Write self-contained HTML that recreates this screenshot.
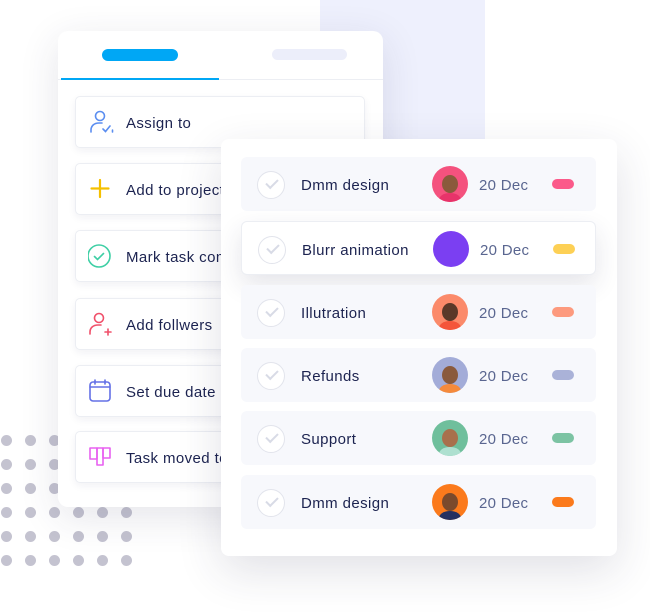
<!DOCTYPE html>
<html><head><meta charset="utf-8"><style>
*{margin:0;padding:0;box-sizing:border-box}
body{width:650px;height:614px;background:#fff;position:relative;overflow:hidden;font-family:"Liberation Sans",sans-serif}
.abs{position:absolute}
.bgp{left:320px;top:0;width:165px;height:150px;background:#eef0fd}
.dot{position:absolute;width:11px;height:11px;border-radius:50%;background:#c4c3d0}
.card1{left:58px;top:31px;width:325px;height:476px;background:#fff;border-radius:10px;box-shadow:0 10px 40px rgba(40,40,80,.12)}
.item{position:absolute;left:17px;width:290px;height:52px;border:1px solid #eceef3;border-radius:5px;background:#fff;box-shadow:0 3px 8px rgba(40,40,80,.06)}
.item span{position:absolute;left:50px;top:18px;font-size:15px;color:#1c2350;letter-spacing:.4px}
.item svg{position:absolute;left:12px;top:12px}
.card2{left:221px;top:139px;width:396px;height:417px;background:#fff;border-radius:8px;box-shadow:0 15px 45px rgba(40,40,80,.14)}
.row{position:absolute;left:20px;width:355px;height:54px;background:#f7f8fc;border-radius:6px}
.row.hl{background:#fff;border:1px solid #eceef3;box-shadow:0 10px 25px rgba(40,40,80,.12)}
.chk{position:absolute;left:16px;top:14px;width:28px;height:28px;border-radius:50%;border:1px solid #e2e4ec;background:#fff}
.row .t{position:absolute;left:60px;top:20px;font-size:15px;color:#1c2350;letter-spacing:.4px}
.av{position:absolute;left:191px;top:9px;width:36px;height:36px;border-radius:50%;overflow:hidden}
.av i{position:absolute;left:10px;top:9px;width:16px;height:18px;border-radius:50%;background:#8a5a3c}
.av b{position:absolute;left:7px;top:27px;width:22px;height:14px;border-radius:50%}
.d{position:absolute;left:238px;top:20px;font-size:15px;color:#5a6690;letter-spacing:.3px}
.pill{position:absolute;left:311px;top:22px;width:22px;height:10px;border-radius:5px}
.chk::after{content:"";position:absolute;left:8px;top:7px;width:10px;height:5px;border-left:2px solid #d8dbe6;border-bottom:2px solid #d8dbe6;transform:rotate(-45deg)}
</style></head><body>
<div class="abs bgp"></div>
<div id="dots"></div>
<script>
(function(){var h='';for(var r=0;r<6;r++)for(var c=0;c<6;c++){h+='<div class="dot" style="left:'+(1+c*24)+'px;top:'+(435+r*24)+'px"></div>'}document.getElementById('dots').innerHTML=h})();
</script>
<div class="abs card1">
 <div class="abs" style="left:44px;top:18px;width:76px;height:12px;border-radius:6px;background:#00a7f5"></div>
 <div class="abs" style="left:214px;top:18px;width:75px;height:11px;border-radius:6px;background:#eceefa"></div>
 <div class="abs" style="left:0;top:48px;width:325px;height:1px;background:#eceef3"></div>
 <div class="abs" style="left:3px;top:47px;width:158px;height:2px;background:#00a7f5"></div>
 <div class="item" style="top:65px"><svg width="26" height="26" viewBox="0 0 26 26" fill="none" stroke="#5b8ef0" stroke-width="1.6" stroke-linecap="round"><circle cx="12" cy="7" r="4.5"/><path d="M3 23v-2c0-4 3-7 8-7h3"/><path d="M15 20l2.5 2.5L22 17"/><path d="M24.5 21v2"/></svg><span>Assign to</span></div>
 <div class="item" style="top:132px"><svg width="26" height="26" viewBox="0 0 26 26" fill="none" stroke="#f5c000" stroke-width="2.2" stroke-linecap="round"><path d="M12 4v17M3.5 12.5h17"/></svg><span>Add to project</span></div>
 <div class="item" style="top:199px"><svg width="26" height="26" viewBox="0 0 26 26" fill="none" stroke="#3ecfa5" stroke-width="1.6" stroke-linecap="round"><circle cx="11" cy="13" r="11"/><path d="M6.5 13.5l3 3 6-6"/></svg><span>Mark task complete</span></div>
 <div class="item" style="top:267px"><svg width="26" height="26" viewBox="0 0 26 26" fill="none" stroke="#f0506a" stroke-width="1.6" stroke-linecap="round"><circle cx="11" cy="7" r="4.5"/><path d="M2 23v-2c0-4 3-7 8-7h3"/><path d="M20 18v6M17 21h6"/></svg><span>Add follwers</span></div>
 <div class="item" style="top:334px"><svg width="26" height="26" viewBox="0 0 26 26" fill="none" stroke="#6370e6" stroke-width="1.6" stroke-linecap="round"><rect x="2" y="4" width="20" height="19" rx="3"/><path d="M2 9h20M7 2v4M17 2v4"/></svg><span>Set due date</span></div>
 <div class="item" style="top:400px"><svg width="26" height="26" viewBox="0 0 26 26" fill="none" stroke="#e860f0" stroke-width="1.6" stroke-linejoin="round"><path d="M2 4h7v11H2z"/><path d="M9 4h6v17H9z"/><path d="M15 4h7v10h-7z"/></svg><span>Task moved to</span></div>
</div>
<div class="abs card2">
 <div class="row" style="top:18px"><div class="chk"></div><div class="t">Dmm design</div><div class="av" style="background:#f4527e"><i></i><b style="background:#e8336a"></b></div><div class="d">20 Dec</div><div class="pill" style="background:#fb5a8a"></div></div>
 <div class="row hl" style="top:82px"><div class="chk"></div><div class="t">Blurr animation</div><div class="av" style="background:#7b3ff2"></div><div class="d">20 Dec</div><div class="pill" style="background:#fdd055"></div></div>
 <div class="row" style="top:146px"><div class="chk"></div><div class="t">Illutration</div><div class="av" style="background:#fb8a6a"><i style="background:#5a3828"></i><b style="background:#f4553a"></b></div><div class="d">20 Dec</div><div class="pill" style="background:#fd9a7e"></div></div>
 <div class="row" style="top:209px"><div class="chk"></div><div class="t">Refunds</div><div class="av" style="background:#a3acd8"><i></i><b style="background:#f58a3c"></b></div><div class="d">20 Dec</div><div class="pill" style="background:#aab2d8"></div></div>
 <div class="row" style="top:272px"><div class="chk"></div><div class="t">Support</div><div class="av" style="background:#6fbf9c"><i style="background:#a8704c"></i><b style="background:#aee0d0"></b></div><div class="d">20 Dec</div><div class="pill" style="background:#7cc3a3"></div></div>
 <div class="row" style="top:336px"><div class="chk"></div><div class="t">Dmm design</div><div class="av" style="background:#fb7a1c"><i style="background:#7a4a2c"></i><b style="background:#263060"></b></div><div class="d">20 Dec</div><div class="pill" style="background:#fb7a1c"></div></div>
</div>
</body></html>
